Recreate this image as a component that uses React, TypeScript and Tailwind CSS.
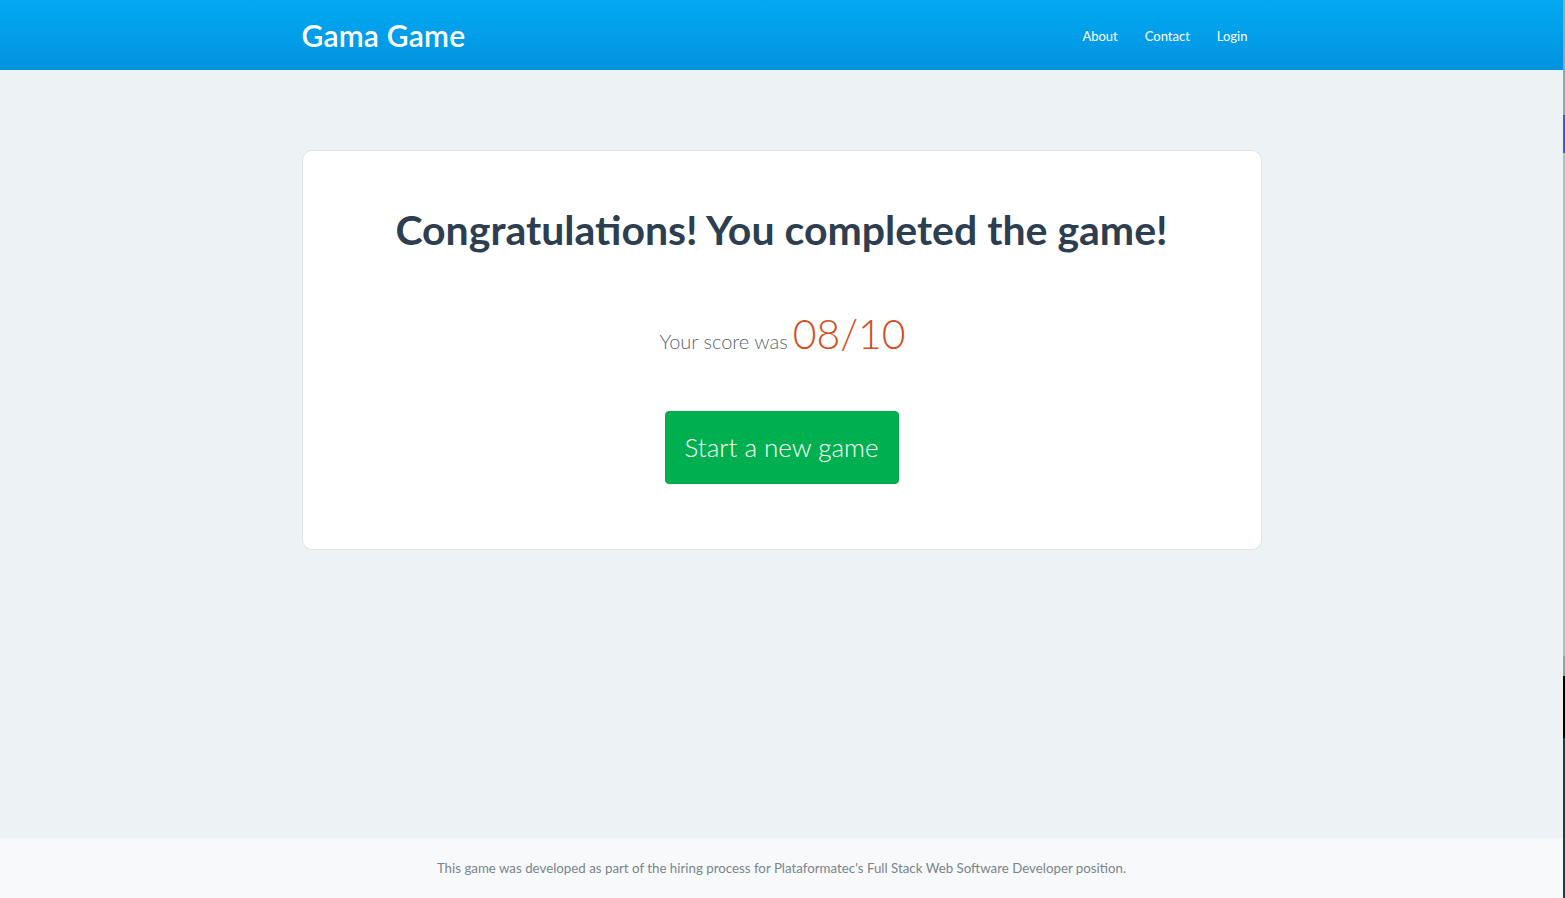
import React from "react";

export default function App() {
  return (
    <div className="flex min-h-[898px]">
      <div
        className="flex-1 min-h-[898px] flex flex-col bg-[#edf2f5]"
        style={{ fontFamily: "Lato, 'Noto Sans', sans-serif" }}
      >
        <header className="h-[70px] bg-gradient-to-b from-[#03a9f4] to-[#0293df]">
          <div className="w-[960px] mx-auto h-full flex items-center justify-between">
            <div className="text-[30px] font-semibold text-white tracking-[0.2px]">Gama Game</div>
            <nav className="flex items-center gap-[27px] text-[13px] text-white pr-[14px] pt-[3px]">
              <a>About</a>
              <a>Contact</a>
              <a>Login</a>
            </nav>
          </div>
        </header>
        <main className="flex-1">
          <div className="w-[960px] mx-auto mt-[80px] bg-white border border-[#dde4e8] rounded-[10px] h-[400px] flex flex-col items-center">
            <h1 className="mt-[53px] text-[41px] font-bold text-[#2c3e50] leading-tight">
              Congratulations! You completed the game!
            </h1>
            <div className="mt-[58px] flex items-baseline gap-[5px] pl-[2px]">
              <span className="text-[20px] font-light text-[#5b6571]">Your score was</span>
              <span className="text-[41px] font-light text-[#d34f1e] leading-none">08/10</span>
            </div>
            <button className="mt-[55px] w-[234px] h-[73px] rounded-[4px] bg-[#00b050] border border-[#00a648] text-white text-[26px] font-light">
              Start a new game
            </button>
          </div>
        </main>
        <footer className="h-[60px] bg-[#f7f9fa] flex items-center justify-center text-[13.3px] text-[#7b848c] pt-[2px]">
          This game was developed as part of the hiring process for Plataformatec's Full Stack Web Software Developer position.
        </footer>
      </div>
      <div className="w-[2px] flex flex-col bg-[#3a3f47]">
        <div className="h-[115px] bg-[#9aa0a6]" />
        <div className="h-[38px] bg-[#5b4fc4]" />
        <div className="h-[503px] bg-[#b8bcc0]" />
        <div className="h-[20px] bg-[#9a9ea2]" />
        <div className="h-[62px] bg-black" />
        <div className="flex-1 bg-[#2e3440]" />
      </div>
    </div>
  );
}
